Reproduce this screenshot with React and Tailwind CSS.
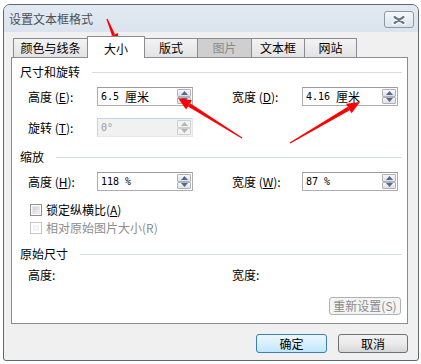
import React from "react";

function arrow(tx, ty, hx, hy, headLen, headW, tailW, shaftW) {
  const dx = hx - tx, dy = hy - ty;
  const L = Math.hypot(dx, dy);
  const ux = dx / L, uy = dy / L;
  const nx = -uy, ny = ux;
  const bx = hx - ux * headLen, by = hy - uy * headLen;
  const shaft = [
    [tx + nx * tailW, ty + ny * tailW],
    [bx + nx * shaftW, by + ny * shaftW],
    [bx - nx * shaftW, by - ny * shaftW],
    [tx - nx * tailW, ty - ny * tailW],
  ];
  const head = [
    [hx, hy],
    [bx + nx * headW, by + ny * headW],
    [bx - nx * headW, by - ny * headW],
  ];
  const s = (p) => p.map((q) => q.map((v) => v.toFixed(1)).join(",")).join(" ");
  return { shaft: s(shaft), head: s(head) };
}

function Arrow({ t, h, headLen = 12, headW = 5, tailW = 0.6, shaftW = 2 }) {
  const a = arrow(t[0], t[1], h[0], h[1], headLen, headW, tailW, shaftW);
  return (
    <g fill="#ff0000">
      <polygon points={a.shaft} />
      <polygon points={a.head} />
    </g>
  );
}

function Spin({ disabled }) {
  const c = disabled ? "#b4b4b4" : "#4d6a9c";
  const cls = disabled
    ? "flex-1 flex items-center justify-center border border-[#cfcfcf] bg-[#f3f3f3] rounded-[1px]"
    : "flex-1 flex items-center justify-center border border-[#b2b2b2] bg-gradient-to-b from-[#f8f8f8] to-[#e0e0e0] rounded-[1px]";
  return (
    <div className="flex flex-col w-[15px] py-px pr-px">
      <div className={cls}>
        <svg width="7" height="4" viewBox="0 0 7 4">
          <path d="M0 4 L3.5 0 L7 4 Z" fill={c} />
        </svg>
      </div>
      <div className={cls}>
        <svg width="7" height="4" viewBox="0 0 7 4">
          <path d="M0 0 L3.5 4 L7 0 Z" fill={c} />
        </svg>
      </div>
    </div>
  );
}

function Field({ value, unit, disabled }) {
  return (
    <div
      className={
        disabled
          ? "w-[96px] h-[19px] flex items-stretch border border-[#c5d5e6] border-b-[#e3e9ef] border-r-[#e3e9ef] bg-[#f1f1f1]"
          : "w-[96px] h-[19px] flex items-stretch border border-[#abadb3] border-t-[#9a9ca3] bg-white"
      }
    >
      <div className={disabled ? "flex-1 flex items-center pl-[3px] text-[#9a9a9a]" : "flex-1 flex items-center pl-[3px] text-black"}>
        <span className="font-['DejaVu_Sans_Mono',monospace] text-[10px] whitespace-pre">{value}</span>
        {unit ? <span>{unit}</span> : null}
      </div>
      <Spin disabled={disabled} />
    </div>
  );
}

function Header({ children }) {
  return (
    <div className="flex items-center h-[14px] pl-[8px] pr-[5px]">
      <span>{children}</span>
      <div className="ml-[12px] flex-1 h-px bg-[#d5dde6]" />
    </div>
  );
}

function Label({ children, w }) {
  return <div className={w}>{children}</div>;
}

function Tab({ children, selected, disabled, w }) {
  if (selected) {
    return (
      <div className={`${w} h-[22px] -mb-px -ml-px relative z-10 flex items-center justify-center pt-[2px] bg-white border border-b-0 border-[#898c95] text-black`}>
        {children}
      </div>
    );
  }
  return (
    <div
      className={
        disabled
          ? `${w} h-[19px] -ml-px flex items-center justify-center border border-b-0 border-[#898c95] bg-[#cfcfcf] text-[#8a8a8a]`
          : `${w} h-[19px] -ml-px flex items-center justify-center border border-b-0 border-[#898c95] bg-gradient-to-b from-[#f3f3f3] to-[#e3e3e3] text-black`
      }
    >
      {children}
    </div>
  );
}

function Check({ disabled, children }) {
  return (
    <div className="flex items-center h-[12px] pl-[18px]">
      <div
        className={
          disabled
            ? "w-[12px] h-[12px] border border-[#c4c4c4] bg-white p-[2px]"
            : "w-[12px] h-[12px] border border-[#8f8f8f] bg-white p-[1px]"
        }
      >
        <div
          className={
            disabled
              ? "w-full h-full bg-[#f4f4f4]"
              : "w-full h-full bg-gradient-to-br from-[#cfcfcf] to-[#f2f2f2] border border-[#e8e8e8]"
          }
        />
      </div>
      <span className={disabled ? "ml-[4px] text-[#8d8d8d]" : "ml-[4px] text-black"}>{children}</span>
    </div>
  );
}

export default function App() {
  return (
    <div className="relative w-[421px] h-[364px] bg-white pt-[4px] pl-[3px] overflow-hidden font-['Noto_Sans_CJK_SC','Noto_Sans',sans-serif] text-[12px] leading-none text-black">
      <div className="w-[416px] h-[357px] border border-[#5e6873] rounded-t-[7px] rounded-b-[3px] bg-[#f0f0f0] flex flex-col overflow-hidden">
        {/* title bar */}
        <div className="h-[27px] flex items-start justify-between bg-gradient-to-b from-[#e2e9f1] to-[#dbe4ee] shrink-0">
          <div className="pl-[5px] pt-[8px] text-[#4a4f55]">设置文本框格式</div>
          <div className="mt-[6px] mr-[4px] w-[30px] h-[17px] rounded-[3px] border border-[#8b98a6] bg-gradient-to-b from-[#f5f8fb] to-[#dbe3ec] flex items-center justify-center">
            <svg width="14" height="10" viewBox="0 0 14 10">
              <path d="M2.5 2 L11.5 8 M11.5 2 L2.5 8" stroke="#ffffff" strokeWidth="4.5" strokeLinecap="round" />
              <path d="M2.5 2 L11.5 8 M11.5 2 L2.5 8" stroke="#6b7785" strokeWidth="2.2" strokeLinecap="round" />
            </svg>
          </div>
        </div>

        {/* client */}
        <div className="pl-[7px] pt-[4px] flex flex-col">
          <div className="flex items-end h-[21px] pl-[3px]">
            <Tab w="w-[75px]">颜色与线条</Tab>
            <Tab selected w="w-[58px]">大小</Tab>
            <Tab w="w-[54px]">版式</Tab>
            <Tab disabled w="w-[55px]">图片</Tab>
            <Tab w="w-[54px]">文本框</Tab>
            <Tab w="w-[53px]">网站</Tab>
          </div>

          <div className="w-[397px] h-[267px] border border-[#898c95] bg-white flex flex-col">
            <div className="mt-[7px]">
              <Header>尺寸和旋转</Header>
            </div>
            <div className="mt-[8px] flex items-center pl-[16px]">
              <Label w="w-[69px]">高度 (<u>E</u>):</Label>
              <Field value="6.5 " unit="厘米" />
              <div className="w-[39px]" />
              <Label w="w-[70px]">宽度 (<u>D</u>):</Label>
              <Field value="4.16 " unit="厘米" />
            </div>
            <div className="mt-[12px] flex items-center pl-[16px]">
              <Label w="w-[69px]">旋转 (<u>T</u>):</Label>
              <Field value="0°" disabled />
            </div>
            <div className="mt-[13px]">
              <Header>缩放</Header>
            </div>
            <div className="mt-[8px] flex items-center pl-[16px]">
              <Label w="w-[69px]">高度 (<u>H</u>):</Label>
              <Field value="118 %" />
              <div className="w-[39px]" />
              <Label w="w-[70px]">宽度 (<u>W</u>):</Label>
              <Field value="87 %" />
            </div>
            <div className="mt-[13px]">
              <Check>锁定纵横比(<u>A</u>)</Check>
            </div>
            <div className="mt-[6px]">
              <Check disabled>相对原始图片大小(R)</Check>
            </div>
            <div className="mt-[13px]">
              <Header>原始尺寸</Header>
            </div>
            <div className="mt-[7px] h-[14px] flex items-center pl-[16px]">
              <div className="w-[204px]">高度:</div>
              <div>宽度:</div>
            </div>
            <div className="mt-[15px] flex justify-end pr-[6px]">
              <div className="w-[72px] h-[18px] rounded-[3px] border border-[#adb2b5] bg-[#f4f4f4] text-[#8a8a8a] flex items-center justify-center">
                重新设置(S)
              </div>
            </div>
          </div>

          <div className="w-[397px] mt-[10px] flex justify-end gap-[11px]">
            <div className="w-[71px] h-[19px] rounded-[3px] border border-[#3c7fb1] bg-gradient-to-b from-[#eaf6fd] via-[#d9f0fc] to-[#bee6fd] flex items-center justify-center">
              确定
            </div>
            <div className="w-[70px] h-[19px] rounded-[3px] border border-[#707070] bg-gradient-to-b from-[#f2f2f2] via-[#ebebeb] to-[#d6d6d6] flex items-center justify-center">
              取消
            </div>
          </div>
        </div>
      </div>

      <svg className="absolute left-0 top-0 pointer-events-none" width="421" height="364">
        <Arrow t={[107, 19]} h={[118, 46]} headLen={12} headW={5} tailW={0.6} shaftW={1.6} />
        <Arrow t={[242, 138]} h={[178, 98]} headLen={13} headW={5.5} tailW={0.6} shaftW={2} />
        <Arrow t={[290, 143]} h={[360, 102]} headLen={13} headW={5.5} tailW={0.6} shaftW={2} />
      </svg>
    </div>
  );
}
